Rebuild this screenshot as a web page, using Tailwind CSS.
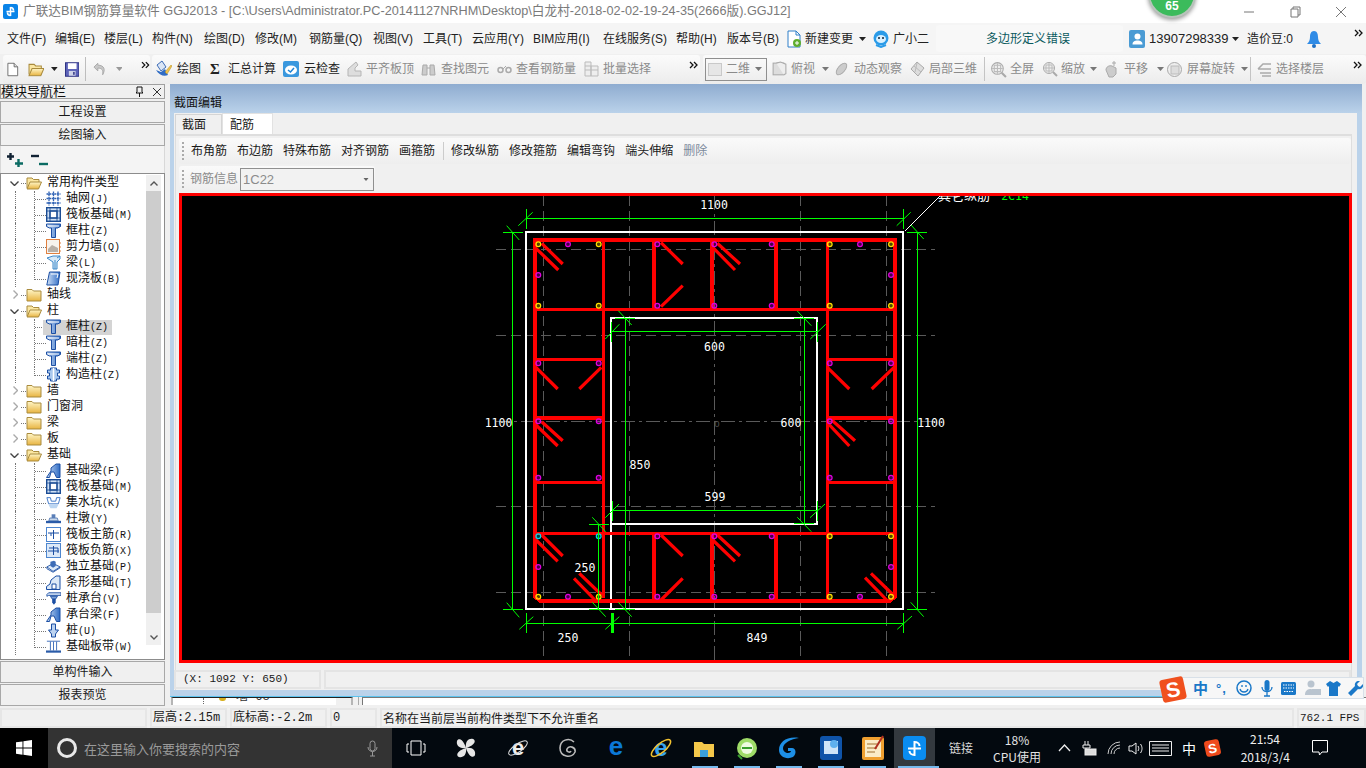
<!DOCTYPE html>
<html lang="zh-CN">
<head>
<meta charset="UTF-8">
<title>广联达BIM钢筋算量软件 GGJ2013</title>
<script src="https://cdn.jsdelivr.net/npm/@tailwindcss/browser@4"></script>
</head>
<body class="relative w-[1366px] h-[768px] overflow-hidden flex flex-col bg-[#f0f0f0] text-[12px] leading-none text-[#1a1a1a] font-['Liberation_Sans','Noto_Sans_CJK_SC',sans-serif]">

<!-- shared icons -->
<svg class="absolute w-0 h-0">
  <defs>
    <linearGradient id="fold" x1="0" y1="0" x2="0" y2="1"><stop offset="0" stop-color="#fff6c8"/><stop offset="1" stop-color="#e8b441"/></linearGradient>
    <linearGradient id="tf" x1="0" y1="0" x2="1" y2="0"><stop offset="0" stop-color="#cfe0f6"/><stop offset="1" stop-color="#2f6cc4"/></linearGradient>
  </defs>
  <symbol id="fclosed" viewBox="0 0 16 14"><path d="M1 3V1.500h5L7.500 3H15v10H1z" fill="url(#fold)" stroke="#a98b3e"/></symbol>
  <symbol id="fopen" viewBox="0 0 16 14"><path d="M1 12V2h5l1.500 1.500H13V6" fill="#fbe7a2" stroke="#a98b3e"/><path d="M1 13l3-7h11.500l-3 7z" fill="url(#fold)" stroke="#a98b3e"/></symbol>
  <symbol id="col" viewBox="0 0 15 15"><path d="M.5 1h14v2.500l-3 1.500H9.500v9.500h-4V5h-2l-3-1.500z" fill="url(#tf)" stroke="#1b4ea3"/><path d="M2 3h11" stroke="#fff"/></symbol>
  <symbol id="grid" viewBox="0 0 15 15"><path d="M3 .5v14M7.500.5v14M12 .5v14M.5 3h14M.5 7.500h14M.5 12h14" stroke="#2f62b5" stroke-width="1.300" fill="none" stroke-dasharray="2 .6"/></symbol>
  <symbol id="raft" viewBox="0 0 15 15"><rect x=".7" y=".7" width="13.600" height="13.600" fill="#cfe0f4" stroke="#1b4c94" stroke-width="1.400"/><rect x="4" y="4" width="7" height="7" fill="#fff" stroke="#1b4c94" stroke-width="1.400"/><path d="M.5 4h14M.5 11h14M4 .5v14M11 .5v14" stroke="#1b4c94" stroke-width=".8"/></symbol>
  <symbol id="wall" viewBox="0 0 15 15"><rect x=".5" y=".5" width="13" height="14" fill="#f7f3ee" stroke="#e08040"/><path d="M2 13h10V9L6 6 2 10z" fill="#b8b0a8"/><path d="M14 4h1M14 8h1M14 12h1" stroke="#e08040"/></symbol>
  <symbol id="beam" viewBox="0 0 15 15"><path d="M1 3l6-2h7v3l-3 3v7H7V7z" fill="#d7e9f8" stroke="#3f8ac9"/><path d="M9 5v9M11 3l3-2" stroke="#3f8ac9"/></symbol>
  <symbol id="slab" viewBox="0 0 15 15"><path d="M3.500 1H14l-2 13H.8z" fill="url(#tf)" stroke="#1b4ea3"/><path d="M5 3h7l-1 4" stroke="#fff" fill="none"/></symbol>
  <symbol id="gz" viewBox="0 0 15 15"><path d="M4.500 1h6v2h3v3h-2v3h2v3h-3v2h-6v-2h-3V9h2V6h-2V3h3z" fill="#a9c8ee" stroke="#1b4ea3"/><path d="M7.500 1v13" stroke="#fff" stroke-width="1.500"/></symbol>
  <symbol id="fbeam" viewBox="0 0 15 15"><path d="M.5 14.500L5 8V5l5-4h4v13.500H10.500L8 9l-3 0-1.500 5.500z" fill="url(#tf)" stroke="#1b4ea3"/></symbol>
  <symbol id="pit" viewBox="0 0 17 15"><path d="M1 2h4l1 4h5l1-4h4l-2 7H3z" fill="#fff" stroke="#2f6cc4"/><path d="M3 10h11l-2 4H5z" fill="#bcd6f2"/></symbol>
  <symbol id="dun" viewBox="0 0 16 15"><rect x="6" y="3" width="4" height="4" fill="#5a7fb8"/><path d="M4 7h8l1 3H3z" fill="#c9d8ea" stroke="#5a7fb8"/><rect x="0" y="10" width="16" height="2.500" fill="#2a5ba8"/></symbol>
  <symbol id="rz" viewBox="0 0 15 15"><rect x=".5" y=".5" width="14" height="14" fill="#fff" stroke="#4d86cf"/><path d="M2 6h11M7.500 3v9M5 6v3" stroke="#1b4ea3" fill="none"/></symbol>
  <symbol id="rf" viewBox="0 0 15 15"><rect x=".5" y=".5" width="14" height="14" fill="#dce9f8" stroke="#4d86cf"/><path d="M2 8h11M7.500 3v9M3 5h9v5" stroke="#1b4ea3" fill="none"/></symbol>
  <symbol id="duli" viewBox="0 0 17 15"><path d="M1 8l7-4 8 4-8 5z" fill="#dce9f8" stroke="#1b4ea3"/><path d="M1 8v2l7 4 8-5V8" fill="none" stroke="#1b4ea3"/><path d="M5 2l4-1 2 1v5l-3 2-3-2z" fill="#3d6cb6"/></symbol>
  <symbol id="tiao" viewBox="0 0 15 15"><path d="M.5 14.500v-3L4 9l1-4 5-4h4v13.500z" fill="#dce9f8" stroke="#1b4ea3"/><path d="M6 14V9h4v5z" fill="#fff" stroke="#1b4ea3"/></symbol>
  <symbol id="ztai" viewBox="0 0 17 15"><path d="M1 3l2-2h14v3H3l-2 1z" fill="#cbdcf2" stroke="#1b4ea3"/><path d="M5 5h8l-2 3H7z" fill="#7fa3d8" stroke="#1b4ea3"/><path d="M7 8h4v4l-2 2.500L7 12z" fill="#1b4ea3"/></symbol>
  <symbol id="pile" viewBox="0 0 15 15"><path d="M5.500 1h4v6h3l-3 4v3h-4v-3l-3-4h3z" fill="#bcd3f0" stroke="#1b4ea3"/></symbol>
  <symbol id="band" viewBox="0 0 17 15"><path d="M1 1.500h15M5 2v10M12 2v10M8.500 2v10" stroke="#2f62b5" fill="none"/><rect x="0" y="12" width="17" height="2.500" fill="#2a5ba8"/></symbol>
  <symbol id="arrow" viewBox="0 0 7 4"><path d="M0 0h7L3.500 4z" fill="currentColor"/></symbol>
  <symbol id="more" viewBox="0 0 9 8"><path d="M1 1l3 3-3 3M5 1l3 3-3 3" fill="none" stroke="#111" stroke-width="1.300"/></symbol>
  <symbol id="gbox" viewBox="0 0 16 16"><rect x="2" y="2" width="10" height="11" fill="#ddd" stroke="#aaa"/><path d="M5 2l4-1 5 2v9l-2 1" fill="#eee" stroke="#aaa"/></symbol>
  <symbol id="gorb" viewBox="0 0 16 16"><circle cx="7" cy="7" r="5.500" fill="#eee" stroke="#aaa"/><path d="M4 4h6v6H4zM7 2v10M2 7h10" stroke="#bbb" fill="none"/><path d="M11 11l4 4" stroke="#aaa" stroke-width="2"/></symbol>
</svg>

<!-- title bar -->
<div class="h-[23px] bg-white flex items-center shrink-0">
  <div class="ml-[3px] w-[15px] h-[15px] rounded-[2px] bg-[#0a84e8] flex items-center justify-center">
    <svg class="w-[11px] h-[11px]" viewBox="0 0 11 11"><path d="M5.500 1v9M1.500 5.500h8M5.500 1.500c2 0 3 1 3 3M5.500 9.500c-2 0-3-1-3-3" fill="none" stroke="#fff" stroke-width="1.600"/></svg>
  </div>
  <span class="ml-[5px] text-[12.7px] text-[#7a7a7a] whitespace-nowrap">广联达BIM钢筋算量软件 GGJ2013 - [C:\Users\Administrator.PC-20141127NRHM\Desktop\白龙村-2018-02-02-19-24-35(2666版).GGJ12]</span>
  <div class="ml-auto flex items-center text-[#777]">
    <svg class="w-[46px] h-[12px]" viewBox="0 0 46 12"><path d="M18 6h10" stroke="#777"/></svg>
    <svg class="w-[46px] h-[12px]" viewBox="0 0 46 12"><path d="M19 3h7v8h-7zM21 3V1h7v8h-2" fill="none" stroke="#777"/></svg>
    <svg class="w-[46px] h-[12px] mr-[2px]" viewBox="0 0 46 12"><path d="M18 1l10 10M28 1L18 11" stroke="#777"/></svg>
  </div>
</div>

<!-- menu bar -->
<div class="h-[31px] bg-[#f5f5f5] flex items-center shrink-0 whitespace-nowrap text-[#222]">
  <span class="ml-[7px] w-[48px]">文件(F)</span>
  <span class="w-[49px]">编辑(E)</span>
  <span class="w-[48px]">楼层(L)</span>
  <span class="w-[52px]">构件(N)</span>
  <span class="w-[51px]">绘图(D)</span>
  <span class="w-[54px]">修改(M)</span>
  <span class="w-[64px]">钢筋量(Q)</span>
  <span class="w-[50px]">视图(V)</span>
  <span class="w-[49px]">工具(T)</span>
  <span class="w-[61px]">云应用(Y)</span>
  <span class="w-[70px]">BIM应用(I)</span>
  <span class="w-[73px]">在线服务(S)</span>
  <span class="w-[51px]">帮助(H)</span>
  <span class="w-[60px]">版本号(B)</span>
  <svg class="w-[15px] h-[18px] mr-[3px]" viewBox="0 0 15 18"><path d="M1 1h8l4 4v12H1z" fill="#fff" stroke="#2f7fc8"/><path d="M9 1v4h4" fill="none" stroke="#2f7fc8"/><circle cx="10" cy="13" r="4" fill="#5fae2e"/><path d="M10 11v4M8 13h4" stroke="#fff"/></svg>
  <span class="w-[48px]">新建变更</span>
  <svg class="ml-[6px] w-[7px] h-[4px] text-[#222]"><use href="#arrow"/></svg>
  <svg class="ml-[7px] w-[16px] h-[18px]" viewBox="0 0 16 18"><ellipse cx="8" cy="8" rx="7.500" ry="7.500" fill="#2a9be8"/><ellipse cx="8" cy="9" rx="5" ry="4" fill="#d8f0ff"/><circle cx="6" cy="8" r="1" fill="#123"/><circle cx="10" cy="8" r="1" fill="#123"/><path d="M3 15l5 2 5-2" fill="none" stroke="#2a9be8" stroke-width="2"/></svg>
  <span class="ml-[4px] w-[36px] shrink-0">广小二</span>
  <div class="ml-[7px] w-[187px] h-[27px] rounded-[3px] bg-[#f8f8f8] flex items-center"><span class="ml-[50px] text-[#0b5a5f]">多边形定义错误</span></div>
  <div class="ml-[6px] w-[16px] h-[18px] rounded-[2px] bg-[#4a9bd4] flex items-center justify-center">
    <svg class="w-[11px] h-[12px]" viewBox="0 0 11 12"><circle cx="5.500" cy="3.500" r="3" fill="#fff"/><path d="M.5 11.500c0-3 2-4 5-4s5 1 5 4z" fill="#fff"/></svg>
  </div>
  <span class="ml-[4px] w-[78px] text-[13px]">13907298339</span>
  <svg class="ml-[5px] w-[7px] h-[4px] text-[#222]"><use href="#arrow"/></svg>
  <span class="ml-[8px] w-[50px]">造价豆:0</span>
  <svg class="ml-[10px] w-[14px] h-[18px]" viewBox="0 0 14 18"><path d="M7 1c3 0 4 3 4 6s1 5 3 7H0c2-2 3-4 3-7s1-6 4-6z" fill="#2f8be6"/><circle cx="7" cy="16" r="2" fill="#1e6fc4"/></svg>
  <svg class="ml-[33px] w-[9px] h-[8px] self-start mt-[6px]"><use href="#more"/></svg>
</div>

<!-- tool bar -->
<div class="h-[30px] bg-[#f0f0f0] flex items-center shrink-0 whitespace-nowrap text-[#8b8b8b]">
  <div class="ml-[3px] w-[147px] h-[29px] rounded-[3px] bg-gradient-to-b from-[#fbfbfb] to-[#ececec] flex items-center">
    <svg class="ml-[4px] w-[12px] h-[15px]" viewBox="0 0 13 16"><path d="M1 1h7l4 4v10H1z" fill="#fff" stroke="#666"/><path d="M8 1v4h4" fill="#ddd" stroke="#666"/></svg>
    <svg class="ml-[9px] w-[17px] h-[15px]" viewBox="0 0 16 14"><use href="#fopen"/></svg>
    <svg class="ml-[7px] w-[7px] h-[4px] text-[#222]"><use href="#arrow"/></svg>
    <svg class="ml-[7px] w-[15px] h-[15px]" viewBox="0 0 15 15"><rect x=".5" y=".5" width="14" height="14" fill="#5c62b8" stroke="#2a2f80"/><rect x="3" y="1" width="9" height="6" fill="#fff"/><rect x="4" y="9" width="7" height="5" fill="#cfd3e8"/><rect x="8.500" y="10" width="1.500" height="3" fill="#2a2f80"/></svg>
    <span class="ml-[6px] w-px h-[24px] bg-[#bdbdbd]"></span>
    <svg class="ml-[7px] w-[13px] h-[14px]" viewBox="0 0 13 14"><path d="M5 1L1 5l4 4V6c4 0 6 2 5 7 3-5 2-10-5-10z" fill="#c8c8c8" stroke="#aaa"/></svg>
    <svg class="ml-[10px] w-[7px] h-[4px] text-[#999]"><use href="#arrow"/></svg>
    <svg class="ml-[19px] w-[9px] h-[8px] self-start mt-[6px]"><use href="#more"/></svg>
  </div>
  <div class="ml-[2px] w-[548px] h-[29px] rounded-[3px] bg-gradient-to-b from-[#fbfbfb] to-[#ececec] flex items-center">
    <div class="ml-[3px] w-[55px] flex items-center text-[#222]"><svg class="w-[17px] h-[18px] mr-[5px]" viewBox="0 0 17 18"><path d="M2 5l5-4 4 6-5 4z" fill="#dbe6f5" stroke="#3d6cb6"/><path d="M1 10c3 5 8 7 12 5l-3-6-4 3z" fill="#2f6cc4"/><path d="M10 12l6-7 1 1-5 8z" fill="#f0c34a" stroke="#b08a20" stroke-width=".5"/></svg>绘图</div>
    <div class="w-[73px] flex items-center text-[#222]"><span class="w-[18px] text-[15px] font-bold font-['Liberation_Serif',serif]">&Sigma;</span>汇总计算</div>
    <div class="w-[64px] flex items-center text-[#222]"><svg class="w-[16px] h-[16px] mr-[5px]" viewBox="0 0 16 16"><rect width="16" height="16" rx="2" fill="#3a98de"/><ellipse cx="8" cy="9" rx="6" ry="4.500" fill="#fff"/><path d="M5 9l2.500 2L11 7" fill="none" stroke="#1d84d6" stroke-width="1.500"/></svg>云检查</div>
    <div class="w-[74px] flex items-center"><svg class="w-[15px] h-[16px] mr-[4px]" viewBox="0 0 15 16"><path d="M1 15V8l8-7 2 3-3 3v3h6v5z" fill="#ddd" stroke="#b5b5b5"/></svg>平齐板顶</div>
    <div class="w-[76px] flex items-center"><svg class="w-[15px] h-[14px] mr-[5px]" viewBox="0 0 15 14"><path d="M2 3h4v10H1zM9 3h4l1 10H9zM6 6h3" fill="#ccc" stroke="#aaa"/></svg>查找图元</div>
    <div class="w-[87px] flex items-center"><svg class="w-[15px] h-[9px] mr-[4px]" viewBox="0 0 15 9"><circle cx="3.500" cy="5" r="2.500" fill="none" stroke="#aaa" stroke-width="1.500"/><circle cx="11.500" cy="5" r="2.500" fill="none" stroke="#aaa" stroke-width="1.500"/><path d="M6 4l3-3" stroke="#aaa"/></svg>查看钢筋量</div>
    <div class="flex items-center"><svg class="w-[15px] h-[16px] mr-[4px]" viewBox="0 0 15 16"><path d="M1 1h6v14H1zM1 5h6M1 9h6M7 5h7v10H7zM7 9h7" fill="#eee" stroke="#bbb"/></svg>批量选择</div>
    <svg class="ml-auto mr-[2px] w-[9px] h-[8px] self-start mt-[6px]"><use href="#more"/></svg>
  </div>
  <div class="ml-[3px] flex-1 h-[29px] rounded-[3px] bg-gradient-to-b from-[#fbfbfb] to-[#ececec] flex items-center">
    <div class="ml-[2px] w-[62px] h-[23px] border border-[#8f8f8f] flex items-center shrink-0">
      <span class="ml-[2px] w-[14px] h-[13px] border border-[#c9c9c9] bg-[#e6e6e6]"></span>
      <span class="ml-[4px]">二维</span>
      <svg class="ml-[5px] w-[7px] h-[4px] text-[#777]"><use href="#arrow"/></svg>
    </div>
    <div class="ml-[4px] w-[50px] flex items-center"><svg class="w-[17px] h-[17px] mr-[3px]"><use href="#gbox"/></svg>俯视</div>
    <svg class="ml-[1px] w-[7px] h-[4px] text-[#777]"><use href="#arrow"/></svg>
    <div class="ml-[5px] w-[76px] flex items-center"><svg class="w-[15px] h-[16px] mr-[5px]" viewBox="0 0 15 16"><ellipse cx="7.500" cy="8" rx="3.500" ry="7" transform="rotate(40 7.500 8)" fill="#ccc" stroke="#aaa"/></svg>动态观察</div>
    <div class="w-[74px] flex items-center"><svg class="w-[15px] h-[16px] mr-[4px]" viewBox="0 0 15 16"><path d="M7 1l7 6-6 8-7-7z" fill="#ddd" stroke="#aaa"/><path d="M4 5l7 6M7 2L5 11" stroke="#bbb"/></svg>局部三维</div>
    <span class="w-px h-[24px] bg-[#c4c4c4]"></span>
    <div class="ml-[5px] w-[52px] flex items-center"><svg class="w-[17px] h-[17px] mr-[3px]"><use href="#gorb"/></svg>全屏</div>
    <div class="w-[47px] flex items-center"><svg class="w-[16px] h-[16px] mr-[3px]"><use href="#gorb"/></svg>缩放</div>
    <svg class="ml-[1px] w-[7px] h-[4px] text-[#777]"><use href="#arrow"/></svg>
    <div class="ml-[7px] w-[48px] flex items-center"><svg class="w-[16px] h-[18px] mr-[4px]" viewBox="0 0 16 18"><path d="M10 1v5M8 3h4" stroke="#aaa"/><path d="M2 10c0-3 3-5 6-4l4 2v6l-3 3H5z" fill="#ccc" stroke="#aaa"/></svg>平移</div>
    <svg class="ml-[5px] w-[7px] h-[4px] text-[#777]"><use href="#arrow"/></svg>
    <div class="ml-[2px] w-[70px] flex items-center"><svg class="w-[17px] h-[17px] mr-[4px]" viewBox="0 0 17 17"><circle cx="8.500" cy="8.500" r="7" fill="#eee" stroke="#aaa"/><rect x="5" y="5" width="8" height="8" fill="#ddd" stroke="#bbb"/></svg>屏幕旋转</div>
    <svg class="ml-[5px] w-[7px] h-[4px] text-[#777]"><use href="#arrow"/></svg>
    <span class="ml-[2px] w-px h-[24px] bg-[#c4c4c4]"></span>
    <div class="ml-[6px] flex items-center"><svg class="w-[15px] h-[15px] mr-[4px]" viewBox="0 0 15 15"><path d="M1 7l5-5h8M1 7h13M3 11h11M5 14h9" fill="none" stroke="#aaa" stroke-width="1.500"/></svg>选择楼层</div>
    <svg class="ml-auto mr-[4px] w-[9px] h-[8px] self-start mt-[6px]"><use href="#more"/></svg>
  </div>
</div>

<!-- main area -->
<div class="flex-1 flex min-h-0">

  <!-- module nav -->
  <div class="w-[165px] flex flex-col shrink-0">
    <div class="h-[15px] border border-[#a0a0a0] flex items-center text-[#111]">
      <span class="text-[13px]">模块导航栏</span>
      <svg class="ml-auto w-[9px] h-[11px]" viewBox="0 0 9 11"><path d="M2 1h5v5l1 1H1l1-1zM4.500 7v4" fill="none" stroke="#111"/></svg>
      <svg class="ml-[9px] mr-[3px] w-[8px] h-[8px]" viewBox="0 0 8 8"><path d="M0 0l8 8M8 0L0 8" stroke="#333"/></svg>
    </div>
    <div class="mt-[2px] h-[22px] border border-[#a8a8a8] bg-[#f0f0f0] flex items-center justify-center">工程设置</div>
    <div class="mt-px h-[22px] border border-[#a8a8a8] bg-[#f0f0f0] flex items-center justify-center">绘图输入</div>
    <div class="h-[27px] flex items-center bg-[#f4f4f4] border-x border-[#d8d8d8]">
      <svg class="ml-[6px] w-[17px] h-[16px]" viewBox="0 0 17 16"><path d="M3.500 1v7M0 4.500h7" stroke="#123" stroke-width="2.400"/><path d="M11.500 7v8M8 11.500h8" stroke="#0b6b63" stroke-width="2.400"/></svg>
      <svg class="ml-[7px] w-[17px] h-[14px]" viewBox="0 0 17 14"><path d="M0 3h8" stroke="#123" stroke-width="2.400"/><path d="M8 11h9" stroke="#0b6b63" stroke-width="2.400"/></svg>
    </div>
    <div class="relative h-[487px] bg-white border border-[#8c8c8c] overflow-hidden flex">
      <div id="tree" class="w-[145px] pt-[1px] overflow-hidden font-['Liberation_Mono','Noto_Sans_CJK_SC',monospace] text-[#111]"></div>
      <!-- scrollbar -->
      <div class="w-[15px] h-[470px] mt-[1px] bg-[#f0f0f0] flex flex-col">
        <div class="h-[16px] flex items-center justify-center"><svg class="w-[8px] h-[5px]" viewBox="0 0 8 5"><path d="M.5 4.500L4 1l3.500 3.500" fill="none" stroke="#555" stroke-width="1.400"/></svg></div>
        <div class="h-[422px] bg-[#cdcdcd]"></div>
        <div class="mt-auto h-[16px] flex items-center justify-center"><svg class="w-[8px] h-[5px]" viewBox="0 0 8 5"><path d="M.5.5L4 4 7.500.5" fill="none" stroke="#555" stroke-width="1.400"/></svg></div>
      </div>
    </div>
    <div class="mt-px h-[22px] border border-[#a8a8a8] bg-[#f0f0f0] flex items-center justify-center">单构件输入</div>
    <div class="mt-px h-[22px] border border-[#a8a8a8] bg-[#f0f0f0] flex items-center justify-center">报表预览</div>
  </div>

  <!-- right side -->
  <div class="ml-[5px] flex-1 flex flex-col min-w-0">
    <div class="w-[1192px] h-[613px] bg-[#bad2ea] flex flex-col border-b border-[#5cc3ee] shrink-0">
      <div class="h-[29px] pl-[4px] pt-[13px] text-[#111] shrink-0 bg-gradient-to-b from-[#8facd0] to-[#bad2ea]">截面编辑</div>
      <div class="flex-1 pl-[4px] min-h-0">
        <div class="w-[1183px] h-[577px] bg-[#f0f0f0]">
          <!-- tabs -->
          <div class="h-[21px] pl-[1px] flex items-end">
            <div class="w-[47px] h-[20px] border border-b-0 border-[#d5d5d5] flex items-center pl-[6px] pt-[1px]">截面</div>
            <div class="w-[51px] h-[21px] bg-white border-x border-t border-[#e2e2e2] flex items-center pl-[7px] pt-[1px]">配筋</div>
          </div>
          <div class="ml-[1px] mr-[5px] h-[556px] border-t-2 border-x border-[#dedede] pl-[3px] pt-[2px]">
            <!-- bar 1 -->
            <div class="h-[26px] rounded-[3px] bg-gradient-to-b from-[#fafafa] to-[#eeeeee] flex items-center gap-[10px] whitespace-nowrap">
              <span class="ml-[3px] -mr-[3px] h-[18px] border-l-2 border-dotted border-[#aaa]"></span>
              <span>布角筋</span><span>布边筋</span><span>特殊布筋</span><span>对齐钢筋</span><span>画箍筋</span>
              <span class="-ml-[2px] -mr-[3px] w-px h-[18px] bg-[#ccc]"></span>
              <span>修改纵筋</span><span>修改箍筋</span><span>编辑弯钩</span><span>端头伸缩</span>
              <span class="text-[#7d8a9c]">删除</span>
            </div>
            <!-- bar 2 -->
            <div class="mt-[2px] w-[196px] h-[26px] rounded-[3px] bg-gradient-to-b from-[#fafafa] to-[#eeeeee] flex items-center">
              <span class="ml-[3px] h-[18px] border-l-2 border-dotted border-[#aaa]"></span>
              <span class="ml-[6px] text-[#8b8b8b]">钢筋信息</span>
              <div class="ml-[2px] w-[134px] h-[23px] border border-[#8f8f8f] bg-[#f2f2f2] flex items-center pl-[2px] text-[13px] text-[#8b8b8b]">1C22<svg class="ml-auto mr-[4px] w-[6px] h-[3px] text-[#666]" viewBox="0 0 7 4"><use href="#arrow"/></svg></div>
            </div>
            <!-- canvas -->
            <div class="mt-[1px] w-[1173px] h-[470px] border-[3px] border-[#ff0000] bg-black overflow-hidden">
              <svg id="cad" class="block w-[1167px] h-[464px]" viewBox="182 196 1167 464" fill="none" shape-rendering="crispEdges">
                <g stroke="#5a5a5a" stroke-dasharray="10 5">
                  <path d="M543.500 196V660M629.500 196V660M800.500 196V660M886.500 196V660M496 249.500H935M496 335.500H935M496 506.500H935M496 592.500H935"/>
                  <path d="M714.500 196V660M496 421.500H935" stroke-dasharray="14 4 3 4"/>
                </g>
                <text x="717" y="427" fill="#555" font-size="9" text-anchor="middle">0</text>
                <g stroke="#fff" stroke-width="2">
                  <rect x="526" y="232" width="377" height="377"/>
                  <path d="M611 609V318H817V524H611"/>
                </g>
                <g stroke="#ff0000" stroke-width="3.500">
                  <path d="M535 240H895V597L890 601H540L535 597ZM603.500 240V598M827.500 240V601M535 309.500H893M535 533.500H893"/>
                  <path d="M654 240V309M712 240V309M776 240V309M654 533V601M712 533V601M776 533V601"/>
                  <path d="M535 359.500H603M535 418H603M535 482.500H603M827 359.500H895M827 418H895M827 482.500H895"/>
                </g>
                <g stroke="#ff0000" stroke-width="3.200" shape-rendering="auto">
                  <path d="M541.700 243.300L562.700 264M536 248.300L558.300 270M661 242.700L682.700 264M661 306.700L682.700 285.700M717.300 243.300L740 264M712.700 247.300L735 270"/>
                  <path d="M536 367.300L557.700 389M601.300 367.300L579.300 389M541.700 421.700L562.700 440.700M536 425L557.700 446M827.300 367.300L849.300 389M894 367.300L871.700 389M831.700 420L855 440.700M827.300 422.700L849.300 446"/>
                  <path d="M541.700 535L562.700 556M536 540L557.700 561.300M579.300 573.300L601.700 595M574 578.300L595 600M661 535L682.700 556M661 600L682.700 578.300M717.300 535L740 556M712.700 540L735 561.300M871 573.300L893.300 595M865 577.700L886.700 600"/>
                </g>
                <g id="dots" shape-rendering="auto" stroke-width="1.200"></g>
                <g stroke="#00ff00">
                  <path d="M526 218.500H903M512.500 232V609M917.500 232V609M611 331.500H817M625.500 318V609M804.500 318V524M612 510.500H817M598.500 524V609M526 623.500H903"/>
                  <path d="M526.500 209V229M903.500 209V229M503 232.500H523M907 232.500H927M503 609.500H523M907 609.500H927M611.500 322V342M817.500 322V342M615 318.500H635M794 318.500H814M615 609.500H635M794 523.500H814M612.500 501V521M817.500 501V521M589 524.500H609M589 609.500H609M526.500 613V633M903.500 613V633"/>
                  <path d="M612 613V633" stroke-width="3"/>
                </g>
                <g stroke="#00ff00" shape-rendering="auto">
                  <path d="M518.300 225.700L532.700 212.300M896.700 225.700L910.700 212.300M506.700 225.700L519.300 240M911 225L923.700 239M506.700 602.700L519.300 617.300M910.700 602.300L923.700 616.700"/>
                  <path d="M605.300 339L619.300 324.300M810.300 339L825.700 324.300M618.300 310.700L631.700 325M797.300 311L811.300 325.700M618.300 602.300L631.700 616.700M797.300 517.300L811.300 531.700M605.300 517.700L619 504M810 517.700L825 504M592.300 517.300L605.700 531.700M592.300 602.300L605.700 616.700"/>
                  <path d="M519.300 629.300L533.300 616.700M605.300 629.300L619.300 616.700M897.300 629.300L912 616"/>
                </g>
                <path d="M905 231L940 196H960" stroke="#fff" shape-rendering="auto"/>
                <g font-family="'DejaVu Sans Mono','Liberation Mono',monospace" font-size="11.500" fill="#fff" text-anchor="middle" shape-rendering="auto">
                  <text x="714" y="208.500">1100</text><text x="498.500" y="426.500">1100</text><text x="931" y="426.500">1100</text>
                  <text x="714.500" y="350.500">600</text><text x="791" y="426.500">600</text><text x="640" y="469">850</text>
                  <text x="715" y="500.500">599</text><text x="585" y="571.500">250</text><text x="568" y="641.500">250</text><text x="757" y="641.500">849</text>
                  <text x="964" y="200" font-family="'Noto Sans CJK SC',sans-serif" font-size="13">其它纵筋</text>
                  <text x="1015" y="200" fill="#00ff00">2C14</text>
                </g>
              </svg>
            </div>
            <!-- coords -->
            <div class="mt-[7px] -ml-[5px] h-[19px] flex gap-[3px]">
              <div class="w-[147px] border-2 border-[#e4e4e4] flex items-center pl-[7px] font-['Liberation_Mono',monospace] text-[11px]">(X: 1092 Y: 650)</div>
              <div class="w-[1028px] border-2 border-[#e4e4e4]"></div>
            </div>
          </div>
        </div>
      </div>
    </div>
    <!-- windows behind the dialog -->
    <div class="flex-1 flex bg-[#f0f0f0] overflow-hidden">
      <div class="ml-[1px] w-[182px] h-[8px] bg-white border-x-2 border-[#b5b5b5] border-t border-t-[#222] flex items-start text-[#333] overflow-hidden">
        <span class="ml-[30px] h-[8px] border-l border-dotted border-[#666]"></span>
        <span class="ml-[15px] w-[7px] h-[3px] rounded-b-full bg-[#d8b020]"></span>
        <span class="ml-[10px] -mt-[7px] font-['Liberation_Mono','Noto_Sans_CJK_SC',monospace]">墙-68</span>
        <span class="ml-auto w-[15px] h-[8px] bg-[#f0f0f0]"></span>
      </div>
      <div class="ml-[5px] flex-1 h-[8px] border-l border-[#aaa] pl-[3px]">
        <div class="h-full bg-white border-l border-t border-[#777]"></div>
      </div>
    </div>
  </div>
</div>

<!-- status bar -->
<div class="h-[21px] shrink-0 flex gap-[3px] bg-[#f0f0f0] whitespace-nowrap font-['Liberation_Mono','Noto_Sans_CJK_SC',monospace] pt-[1px]">
  <div class="w-[147px] border-2 border-[#e6e6e6]"></div>
  <div class="w-[77px] border-2 border-[#e6e6e6] flex items-center pl-px">层高:2.15m</div>
  <div class="w-[97px] border-2 border-[#e6e6e6] flex items-center pl-px">底标高:-2.2m</div>
  <div class="w-[47px] border-2 border-[#e6e6e6] flex items-center pl-px">0</div>
  <div class="w-[914px] border-2 border-[#e6e6e6] flex items-center pl-px font-['Noto_Sans_CJK_SC',sans-serif]">名称在当前层当前构件类型下不允许重名</div>
  <div class="w-[69px] border-2 border-[#e6e6e6] flex items-center pl-px text-[11px]">762.1 FPS</div>
</div>

<!-- task bar -->
<div class="h-[40px] shrink-0 flex items-center bg-[#03090f] text-white whitespace-nowrap font-['Noto_Sans_CJK_SC',sans-serif]">
  <div class="w-[48px] h-full flex items-center justify-center bg-black">
    <svg class="w-[16px] h-[16px]" viewBox="0 0 16 16"><path d="M0 2.300l6.500-.9v6.200H0zM7.400 1.300L16 0v7.600H7.400zM0 8.500h6.500v6.200L0 13.800zM7.400 8.500H16V16l-8.600-1.200z" fill="#fff"/></svg>
  </div>
  <div class="w-[344px] h-full bg-[#333] flex items-center text-[#9a9a9a] text-[13px]">
    <span class="ml-[9px] w-[20px] h-[20px] rounded-full border-[3px] border-[#e8e8e8]"></span>
    <span class="ml-[7px]">在这里输入你要搜索的内容</span>
    <svg class="ml-auto mr-[14px] w-[11px] h-[17px]" viewBox="0 0 11 17"><rect x="3" y="1" width="5" height="10" rx="2.500" fill="none" stroke="#999"/><path d="M1 7c0 6 9 6 9 0M5.500 12v4M3 16h5" fill="none" stroke="#999"/></svg>
  </div>
  <div class="w-[48px] flex justify-center"><svg class="w-[20px] h-[16px]" viewBox="0 0 20 16"><path d="M5 1h10v14H5zM3 4H1v8h2M17 4h2v8h-2" fill="none" stroke="#fff"/></svg></div>
  <div class="w-[52px] flex justify-center"><svg class="w-[22px] h-[22px]" viewBox="0 0 22 22"><path d="M11 11C4 12 1 8 2 4c1-3 6-3 9 7zM11 11c-1-7 3-10 7-9 3 1 3 6-7 9zM11 11c7-1 10 3 9 7-1 3-6 3-9-7zM11 11c1 7-3 10-7 9-3-1-3-6 7-9z" fill="#e6e6e6"/></svg></div>
  <div class="w-[51px] flex justify-center"><svg class="w-[22px] h-[24px]" viewBox="0 0 22 24"><text x="11" y="19" text-anchor="middle" font-size="22" font-family="'Liberation Sans',sans-serif" font-weight="700" fill="#eee">e</text><ellipse cx="11" cy="12" rx="11" ry="4" transform="rotate(-35 11 12)" fill="none" stroke="#ddd"/></svg></div>
  <div class="w-[49px] flex justify-center"><svg class="w-[19px] h-[21px]" viewBox="0 0 19 21"><path d="M16 4C11-1 2 2 2 10c0 9 12 11 15 4 1-5-6-7-8-3-1 3 3 4 4 2" fill="none" stroke="#bbb" stroke-width="1.600"/></svg></div>
  <div class="w-[48px] flex justify-center"><svg class="w-[20px] h-[22px]" viewBox="0 0 20 22"><text x="10" y="18" text-anchor="middle" font-size="26" font-family="'Liberation Sans',sans-serif" font-weight="700" fill="#0b78d6">e</text></svg></div>
  <div class="w-[42px] flex justify-center"><svg class="w-[24px] h-[24px]" viewBox="0 0 24 24"><text x="12" y="20" text-anchor="middle" font-size="24" font-family="'Liberation Sans',sans-serif" font-weight="700" fill="#36a3ee">e</text><ellipse cx="12" cy="12" rx="12" ry="4.500" transform="rotate(-40 12 12)" fill="none" stroke="#f2c230" stroke-width="1.500"/></svg></div>
  <div class="w-[44px] flex justify-center"><svg class="w-[22px] h-[19px]" viewBox="0 0 22 19"><path d="M1 3h8l2 2h10v13H1z" fill="#f5c84a"/><rect x="7" y="11" width="8" height="7" fill="#3aa0dc"/></svg></div>
  <div class="w-[42px] flex justify-center"><svg class="w-[22px] h-[26px]" viewBox="0 0 22 26"><circle cx="11" cy="13" r="10" fill="#9fdc68"/><circle cx="11" cy="13" r="6" fill="#eefbe0"/><path d="M6 13h10" stroke="#39a02e" stroke-width="2"/><path d="M2 20l4 4" stroke="#39a02e" stroke-width="2"/></svg></div>
  <div class="w-[42px] flex justify-center"><svg class="w-[24px] h-[26px]" viewBox="0 0 24 26"><path d="M22 3C10 1 2 7 2 15c0 7 8 10 14 7 4-3 3-9-1-9h-4v3h3c0 3-8 3-8-3 0-5 8-9 16-10z" fill="#1d8fe6"/></svg></div>
  <div class="w-[42px] flex justify-center"><svg class="w-[24px] h-[26px]" viewBox="0 0 24 26"><rect x="1" y="1" width="22" height="24" rx="3" fill="#0f53a8"/><rect x="5" y="6" width="14" height="13" fill="#cfe4f7"/><circle cx="15" cy="9" r="4" fill="#5fb0ee"/></svg></div>
  <div class="w-[42px] flex justify-center"><svg class="w-[24px] h-[26px]" viewBox="0 0 24 26"><rect x="1" y="2" width="22" height="23" rx="2" fill="#f0a030"/><rect x="4" y="5" width="16" height="17" fill="#fbecc8"/><path d="M6 9h10M6 13h10M6 17h8" stroke="#a07030"/><path d="M14 14l8-13" stroke="#b03020" stroke-width="2"/></svg></div>
  <div class="w-[41px] h-full bg-[#33393f] flex items-center justify-center"><div class="w-[23px] h-[24px] rounded-[4px] bg-[#0a8cf0] flex items-center justify-center"><svg class="w-[17px] h-[17px]" viewBox="0 0 17 17"><path d="M8.500 1v15M2 8.500h13M8.500 2c3 0 5 2 5 4M8.500 15c-3 0-5-2-5-4" fill="none" stroke="#fff" stroke-width="2"/></svg></div></div>
  <span class="ml-[14px] w-[24px] text-[12px] text-[#d8d8d8] shrink-0">链接</span>
  <div class="ml-[11px] w-[66px] flex flex-col items-center gap-[5px] text-[12px] text-[#e4e4e4]"><span>18%</span><span>CPU使用</span></div>
  <svg class="ml-[8px] w-[13px] h-[8px]" viewBox="0 0 13 8"><path d="M1 7l5.500-6L12 7" fill="none" stroke="#eee" stroke-width="1.300"/></svg>
  <svg class="ml-[11px] w-[15px] h-[15px]" viewBox="0 0 15 15"><path d="M3 0v4M6 0v4M1 4h7v3H1zM4 7v2" stroke="#eee" fill="none"/><rect x="3" y="8" width="11" height="6" fill="#ddd" stroke="#eee"/></svg>
  <svg class="ml-[10px] w-[14px] h-[14px]" viewBox="0 0 14 14"><path d="M1 13a12 12 0 0 1 12-12M4 13a9 9 0 0 1 9-9M7 13a6 6 0 0 1 6-6" fill="none" stroke="#ccc"/></svg>
  <svg class="ml-[7px] w-[15px] h-[15px]" viewBox="0 0 15 15"><path d="M1 5h3l4-3v11l-4-3H1zM10 5c1 1.500 1 3.500 0 5M12.500 3c2 3 2 6 0 9" fill="none" stroke="#eee"/></svg>
  <svg class="ml-[6px] w-[23px] h-[15px]" viewBox="0 0 23 15"><path d="M.5.5h22v14H.5zM3 4h17M3 7h17M3 10h17" fill="none" stroke="#eee"/></svg>
  <span class="ml-[10px] text-[14px]">中</span>
  <div class="ml-[9px] w-[15px] h-[16px] bg-[#ef4a1c] rounded-[3px] -rotate-12 flex items-center justify-center text-[13px] font-bold font-['Liberation_Sans',sans-serif]">S</div>
  <div class="ml-[18px] w-[52px] flex flex-col items-end gap-[6px] text-[12px] text-[#eee]"><span class="mr-[10px]">21:54</span><span>2018/3/4</span></div>
  <svg class="ml-[22px] w-[16px] h-[16px]" viewBox="0 0 16 16"><path d="M.5.5h15v11.500H10L7.500 15 7 12H.5z" fill="none" stroke="#fff"/></svg>
</div>

<!-- running-app underlines on the task bar -->
<div class="absolute left-[692px] bottom-0 flex">
  <span class="w-[26px] h-[2px] bg-[#76b9ed]"></span><span class="ml-[16px] w-[26px] h-[2px] bg-[#76b9ed]"></span><span class="ml-[16px] w-[26px] h-[2px] bg-[#76b9ed]"></span><span class="ml-[16px] w-[26px] h-[2px] bg-[#76b9ed]"></span><span class="ml-[16px] w-[26px] h-[2px] bg-[#76b9ed]"></span><span class="ml-[12px] w-[41px] h-[2px] bg-[#76b9ed]"></span>
</div>

<!-- floating score ball -->
<div class="absolute left-[1148px] -top-[30px] w-[48px] h-[48px] rounded-full bg-[#3cbb5c] border-[2px] border-[#b8c4bb] shadow-[0_2px_4px_rgba(0,0,0,0.4)] flex items-end justify-center pb-[4px] text-white text-[12px] font-bold">65</div>

<!-- input method bar -->
<div class="absolute left-[1175px] top-[677px] w-[189px] h-[22px] bg-[#f7f7f7] border border-[#d8e0e8] flex items-center text-[#1a78c8]">
  <span class="ml-[17px] text-[15px] font-bold">中</span>
  <span class="ml-[8px] text-[13px] font-bold tracking-[1px]">°,</span>
  <svg class="ml-[9px] w-[16px] h-[16px]" viewBox="0 0 16 16"><circle cx="8" cy="8" r="7" fill="none" stroke="#1a78c8" stroke-width="1.500"/><path d="M4 9c1 4 7 4 8 0M6 5v2M10 5v2" fill="none" stroke="#1a78c8" stroke-width="1.300"/></svg>
  <svg class="ml-[9px] w-[12px] h-[17px]" viewBox="0 0 12 17"><rect x="3.500" y="0" width="5" height="11" rx="2.500" fill="#1a78c8"/><path d="M1 7c0 6 10 6 10 0M6 12v4M3 16h6" fill="none" stroke="#1a78c8" stroke-width="1.300"/></svg>
  <svg class="ml-[8px] w-[15px] h-[13px]" viewBox="0 0 15 13"><rect width="15" height="13" rx="1.500" fill="#1a78c8"/><path d="M2 3h11M2 6h11M3 9.500h9" stroke="#fff" stroke-dasharray="1.500 1"/></svg>
  <svg class="ml-[9px] w-[16px] h-[16px]" viewBox="0 0 16 16"><circle cx="6" cy="4" r="3.500" fill="#b9c4cf"/><path d="M0 15c0-5 3-6 6-6l3 1v5z" fill="#b9c4cf"/><rect x="7" y="9" width="9" height="6" fill="#b9c4cf"/></svg>
  <svg class="ml-[5px] w-[15px] h-[15px]" viewBox="0 0 15 15"><path d="M4 0l3.500 2L11 0l4 3-2 3-1-1v10H3V5L2 6 0 3z" fill="#1a78c8"/></svg>
  <svg class="ml-[7px] w-[15px] h-[15px]" viewBox="0 0 15 15"><path d="M15 3l-3 3-2-1-1-2 3-3c-3-1-6 2-5 5L0 12l3 3 7-7c3 1 6-2 5-5z" fill="#1a78c8"/></svg>
</div>
<div class="absolute left-[1161px] top-[678px] w-[24px] h-[23px] bg-[#f0501e] rounded-[3px] -rotate-12 flex items-center justify-center text-white text-[21px] font-bold font-['Liberation_Sans',sans-serif]">S</div>

<script>
  // tree rows: [label, icon, level]; level 0 is a folder, 1 is a leaf, 2 the selected leaf
  const rows = [
    ['常用构件类型', 'fopen', 0], ['轴网(J)', 'grid', 1], ['筏板基础(M)', 'raft', 1], ['框柱(Z)', 'col', 1], ['剪力墙(Q)', 'wall', 1], ['梁(L)', 'beam', 1], ['现浇板(B)', 'slab', 1],
    ['轴线', 'fclosed', 0], ['柱', 'fopen', 0], ['框柱(Z)', 'col', 2], ['暗柱(Z)', 'col', 1], ['端柱(Z)', 'col', 1], ['构造柱(Z)', 'gz', 1],
    ['墙', 'fclosed', 0], ['门窗洞', 'fclosed', 0], ['梁', 'fclosed', 0], ['板', 'fclosed', 0], ['基础', 'fopen', 0],
    ['基础梁(F)', 'fbeam', 1], ['筏板基础(M)', 'raft', 1], ['集水坑(K)', 'pit', 1], ['柱墩(Y)', 'dun', 1], ['筏板主筋(R)', 'rz', 1], ['筏板负筋(X)', 'rf', 1],
    ['独立基础(P)', 'duli', 1], ['条形基础(T)', 'tiao', 1], ['桩承台(V)', 'ztai', 1], ['承台梁(F)', 'fbeam', 1], ['桩(U)', 'pile', 1], ['基础板带(W)', 'band', 1]
  ];
  const lastLeaf = [6, 12, 29];
  const tree = document.getElementById('tree');
  rows.forEach((r, i) => {
    const row = tree.appendChild(document.createElement('div'));
    row.className = 'relative h-[16px] flex items-center whitespace-nowrap';
    const label = r[0].replace(/\(.*\)/, m => '<span class="text-[10px]">' + m + '</span>');
    const open = r[1] === 'fopen';
    const chevron = open
      ? '<svg class="absolute left-[9px] top-[6px] w-[9px] h-[5px]" viewBox="0 0 9 5"><path d="M.5.5L4.500 4.500 8.500.5" fill="none" stroke="#444" stroke-width="1.400"/></svg>'
      : '<svg class="absolute left-[12px] top-[3px] w-[5px] h-[9px]" viewBox="0 0 5 9"><path d="M.5.5L4.500 4.500.5 8.500" fill="none" stroke="#aaa" stroke-width="1.400"/></svg>';
    if (r[2] === 0) {
      row.innerHTML = chevron +
        '<span class="absolute left-[20px] top-[8px] w-[5px] border-t border-dotted border-[#777]"></span>' +
        '<svg class="absolute left-[25px] top-[1px] w-[16px] h-[14px]"><use href="#' + r[1] + '"/></svg>' +
        '<span class="absolute left-[46px] top-[2px]">' + label + '</span>';
    } else {
      const tall = lastLeaf.includes(i) ? 'h-[9px]' : 'h-[16px]';
      row.innerHTML =
        '<span class="absolute left-[14px] top-0 h-[16px] border-l border-dotted border-[#777]"></span>' +
        '<span class="absolute left-[33px] top-0 ' + tall + ' border-l border-dotted border-[#777]"></span>' +
        '<span class="absolute left-[34px] top-[8px] w-[11px] border-t border-dotted border-[#777]"></span>' +
        (r[2] === 2 ? '<span class="absolute left-[42px] top-[1px] w-[69px] h-[15px] bg-[#d4d4d4]"></span>' : '') +
        '<svg class="absolute left-[45px] top-0 w-[15px] h-[15px]"><use href="#' + r[1] + '"/></svg>' +
        '<span class="absolute left-[65px] top-[2px]">' + label + '</span>';
    }
  });

  // rebar dots: y, then x and colour for each
  const X = [538.3, 568, 598.7, 657.3, 714.3, 771.7, 829.7, 860, 891];
  const Y = '#ffe000', M = '#e000e0', C = '#00d8e8';
  const dots = [
    [244.3, [[0, Y], [1, M], [2, Y], [3, M], [4, M], [5, M], [6, Y], [7, M], [8, Y]]],
    [275, [[0, M], [8, M]]],
    [305.7, [[0, Y], [2, Y], [3, M], [4, M], [5, M], [6, Y], [8, Y]]],
    [363.3, [[0, M], [2, M], [6, M], [8, M]]],
    [421.3, [[0, M], [2, M], [6, M], [8, M]]],
    [477.7, [[0, M], [2, M], [6, M], [8, M]]],
    [536.3, [[0, C], [2, C], [3, M], [4, M], [5, M], [6, Y], [8, Y]]],
    [567, [[0, M], [8, M]]],
    [596.7, [[0, Y], [1, M], [2, Y], [3, M], [4, M], [5, M], [6, Y], [7, M], [8, Y]]]
  ];
  let out = '';
  dots.forEach(([y, list]) => list.forEach(([i, c]) => {
    out += '<circle cx="' + X[i] + '" cy="' + y + '" r="2.4" stroke="' + c + '" fill="' + c + '" fill-opacity="0.3"/>';
  }));
  document.getElementById('dots').innerHTML = out;
</script>
</body>
</html>
